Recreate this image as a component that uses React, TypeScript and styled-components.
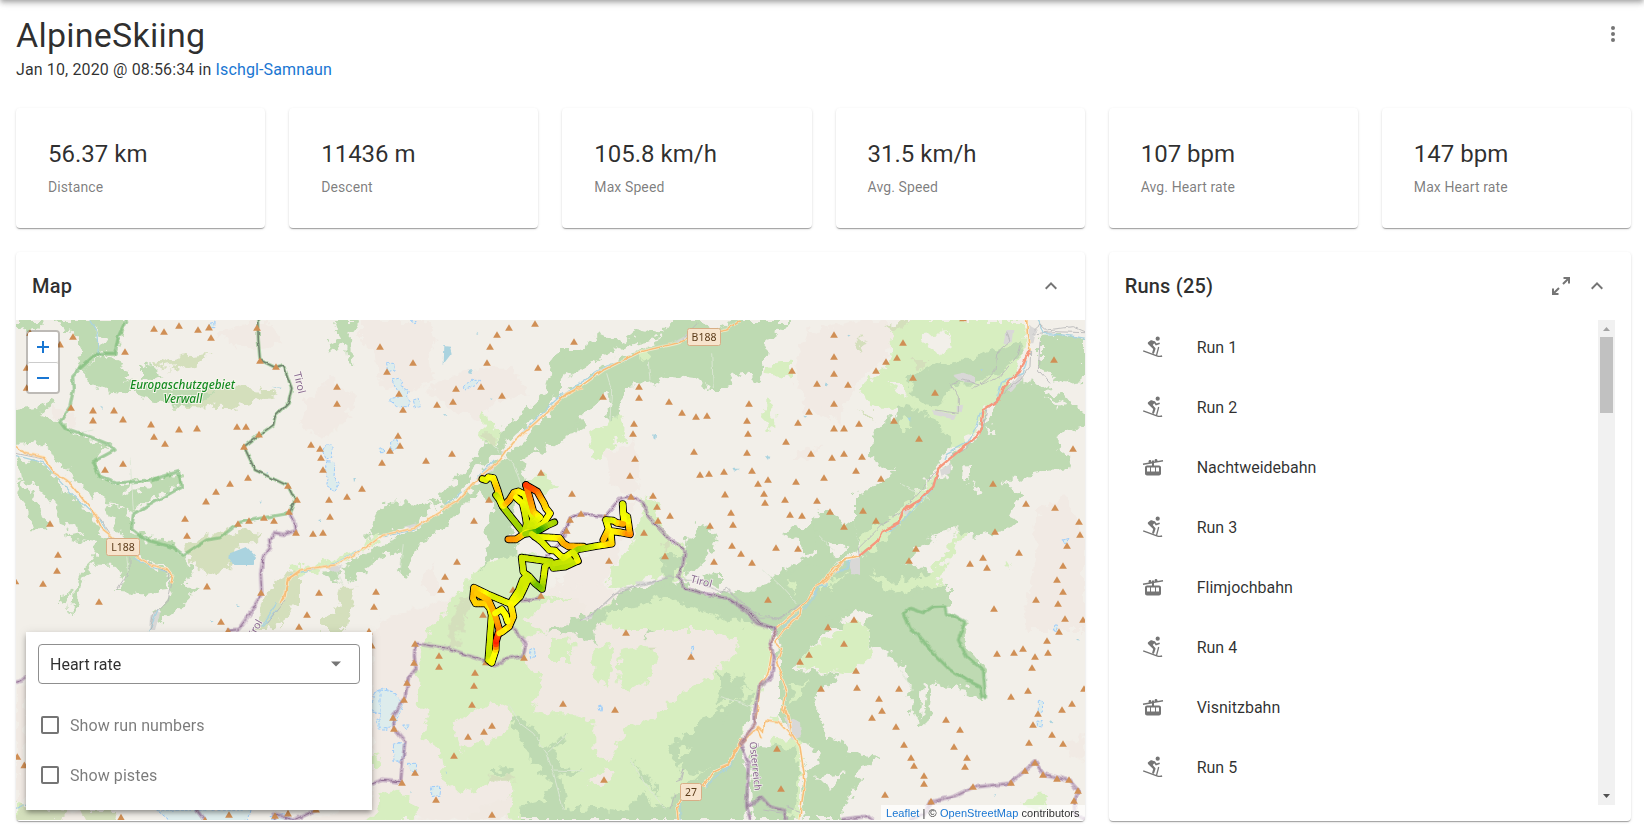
import React from "react";
import styled, { createGlobalStyle } from "styled-components";

const GlobalStyle = createGlobalStyle`
  * { box-sizing: border-box; }
  html, body { margin: 0; height: 825px; overflow: hidden; background: #fff; }
  body { font-family: Roboto, "Liberation Sans", sans-serif; color: rgba(0, 0, 0, 0.82); }
  p, h1, h2, ul { margin: 0; padding: 0; }
`;

/* ---------- layout ---------- */

const AppBar = styled.header`
  position: fixed;
  top: -64px;
  left: 0;
  right: 0;
  height: 64px;
  box-shadow: 0 2px 4px -1px rgba(0, 0, 0, 0.2), 0 4px 5px 0 rgba(0, 0, 0, 0.14),
    0 1px 10px 0 rgba(0, 0, 0, 0.12);
`;

const Page = styled.main`
  padding: 14px 13px 0 16px;
`;

const PageHeader = styled.div`
  display: flex;
  justify-content: space-between;
  height: 94px;
`;

const Title = styled.h1`
  font-size: 34px;
  font-weight: 400;
  line-height: 42px;
  letter-spacing: 0.25px;
`;

const Subtitle = styled.p`
  font-size: 16px;
  line-height: 24px;
  letter-spacing: 0.13px;
  margin-top: 2px;
`;

const Link = styled.a`
  color: #1976d2;
  text-decoration: none;
`;

const MenuButton = styled.button`
  border: 0;
  background: none;
  padding: 8px 6px 0 0;
  height: 32px;
`;

const Grid = styled.div`
  display: grid;
  grid-template-columns: repeat(6, 1fr);
  gap: 24px;
`;

const Card = styled.section<{ $span?: number }>`
  grid-column: span ${(p) => p.$span ?? 1};
  background: #fff;
  border-radius: 4px;
  overflow: hidden;
  box-shadow: 0 2px 1px -1px rgba(0, 0, 0, 0.2), 0 1px 1px 0 rgba(0, 0, 0, 0.14),
    0 1px 3px 0 rgba(0, 0, 0, 0.12);
`;

const StatCard = styled(Card)`
  height: 120px;
  padding: 29px 32px;
`;

const StatValue = styled.p`
  font-size: 24px;
  line-height: 34px;
`;

const StatLabel = styled.p`
  font-size: 14px;
  line-height: 20px;
  margin-top: 6px;
  letter-spacing: 0.1px;
  color: rgba(0, 0, 0, 0.52);
`;

const Panel = styled(Card)`
  height: 568.5px;
  display: flex;
  flex-direction: column;
`;

const PanelHeader = styled.div`
  display: flex;
  align-items: center;
  justify-content: space-between;
  height: 68px;
  padding: 0 22px 0 16px;
  flex: none;
`;

const PanelTitle = styled.h2`
  font-size: 20px;
  font-weight: 500;
  line-height: 32px;
  letter-spacing: 0.2px;
`;

const Actions = styled.div`
  display: flex;
  gap: 12px;
  align-items: center;
`;

/* ---------- map ---------- */

const MapArea = styled.div`
  position: relative;
  flex: 1;
  overflow: hidden;
`;

const MapSvg = styled.svg`
  display: block;
  width: 1069px;
  height: 500px;
`;

const ZoomControl = styled.div`
  position: absolute;
  top: 10px;
  left: 10px;
  width: 34px;
  border: 2px solid rgba(0, 0, 0, 0.22);
  border-radius: 4px;
  background-clip: padding-box;
`;

const ZoomButton = styled.button`
  display: flex;
  align-items: center;
  justify-content: center;
  width: 30px;
  height: 30px;
  padding: 0;
  border: 0;
  background: #fff;
  border-radius: 2px;
  & + & {
    border-top: 1px solid #ccc;
  }
`;

const Controls = styled.div`
  position: absolute;
  left: 10px;
  top: 312px;
  width: 346px;
  height: 178px;
  padding: 12px;
  background: #fff;
  box-shadow: 0 3px 4px -1px rgba(0, 0, 0, 0.2), 0 3px 6px rgba(0, 0, 0, 0.2),
    0 1px 10px rgba(0, 0, 0, 0.1);
`;

const Select = styled.div`
  display: flex;
  align-items: center;
  justify-content: space-between;
  height: 40px;
  padding: 0 17px 0 11px;
  border: 1px solid #8f8f8f;
  border-radius: 4px;
  font-size: 16px;
  margin-bottom: 16px;
`;

const CheckRow = styled.label`
  display: flex;
  align-items: center;
  gap: 11px;
  height: 50px;
  padding-left: 3px;
  font-size: 16px;
  letter-spacing: 0.08px;
  color: rgba(0, 0, 0, 0.52);
`;

const CheckBox = styled.span`
  width: 18px;
  height: 18px;
  border: 2px solid #757575;
  border-radius: 2px;
`;

const Attribution = styled.div`
  position: absolute;
  right: 0;
  bottom: 0;
  height: 16px;
  padding: 0 5px;
  background: rgba(255, 255, 255, 0.72);
  font: 11px/16px "Liberation Sans", Arial, sans-serif;
  letter-spacing: 0.06px;
  color: #333;
  white-space: nowrap;
`;

/* ---------- runs ---------- */

const RunBody = styled.div`
  display: flex;
  height: 485px;
  padding-right: 16px;
`;

const RunList = styled.ul`
  flex: 1;
  list-style: none;
  overflow: hidden;
  padding-left: 32px;
`;

const RunRow = styled.li`
  display: flex;
  align-items: center;
  gap: 32px;
  height: 60px;
  font-size: 16px;
  &:first-child {
    margin-top: -3px;
  }
`;

const ScrollTrack = styled.div`
  display: flex;
  flex-direction: column;
  align-items: center;
  width: 17px;
  background: #f1f1f1;
`;

const ScrollArrow = styled.svg`
  width: 17px;
  height: 17px;
  flex: none;
`;

const ScrollThumb = styled.div`
  width: 13px;
  height: 76px;
  background: #c1c1c1;
  margin-bottom: auto;
`;

const Chevron = () => (
  <svg width="24" height="24" viewBox="0 0 24 24" fill="#757575">
    <path d="M12 8l-6 6 1.410 1.410L12 10.830l4.590 4.580L18 14z" />
  </svg>
);

const Expand = () => (
  <svg width="24" height="24" viewBox="0 0 24 24" fill="#757575">
    <path d="M14.500 3H21v6.500h-2V6.410l-4.300 4.300-1.410-1.410L17.590 5H14.500zM9.500 21H3v-6.500h2v3.090l4.300-4.300 1.410 1.410L6.410 19H9.500z" />
  </svg>
);

const SkiIcon = () => (
  <svg width="24" height="24" viewBox="0 0 24 24" fill="none" stroke="#757575">
    <circle cx="16.700" cy="3.700" r="2.100" fill="#757575" stroke="none" />
    <path d="M7.100 7.300l2.300-1.700c.6-.4 1.200-.5 1.900-.2l2.700 1.100-.1 1.100-2.200 2.500 2.600 2.800c.3.300.3.700.2 1.100l-1.600 4.800-1.900-.6 1.200-4.300-4.700-4.500c-.9-.8-.9-1.600-.4-2.100z" fill="#757575" stroke="none" />
    <path d="M13.200 6.800l1.900 2.700 3.600-1.200" strokeWidth="1.700" />
    <path d="M2.200 15.800l13.700 5c1.900.7 3.600.8 5.200.2" strokeWidth="1.400" />
    <path d="M17.700 12l-2.200 8.400" strokeWidth="1.300" />
  </svg>
);

const GondolaIcon = () => (
  <svg width="24" height="24" viewBox="0 -0.500 24 24" fill="#757575">
    <path d="M18 10H13V7.590L22.120 6.070L21.880 4.590L16.410 5.500C16.460 5.350 16.500 5.180 16.500 5C16.500 4.170 15.830 3.500 15 3.500S13.500 4.170 13.500 5C13.500 5.350 13.630 5.680 13.840 5.930L13 6.070V5H11V6.410L10.410 6.500C10.460 6.350 10.500 6.180 10.500 6C10.500 5.170 9.830 4.500 9 4.500S7.500 5.170 7.500 6C7.500 6.360 7.630 6.680 7.830 6.930L1.880 7.930L2.120 9.410L11 7.930V10H6C4.900 10 4 10.900 4 12V18C4 19.100 4.900 20 6 20H18C19.100 20 20 19.100 20 18V12C20 10.900 19.100 10 18 10M6 16V12H9V16H6M10 16V12H14V16H10M18 16H15V12H18V16Z" />
  </svg>
);

/* Map drawing data. Each survey sheet has its own origin and a 3:1 scale. */
type Sheet = "A" | "B" | "C" | "D" | "E" | "F" | "G" | "R";
const ORIGIN: Record<Sheet, [number, number]> = {
  A: [0, 310],
  B: [280, 310],
  C: [560, 310],
  D: [820, 310],
  E: [0, 610],
  F: [380, 580],
  G: [720, 560],
  R: [440, 460],
};
type Shapes = Partial<Record<Sheet, string>>;

const rock: Shapes = {
  A: "M655 75L750 30L800 30L850 100L760 115L700 105ZM150 290L190 300L230 320L220 350L170 325Z",
  B: "M240 30L440 30L480 80L440 150L470 210L380 250L300 230L290 130L240 90ZM80 270L150 200L220 260L200 330L140 390L60 340ZM440 240L560 180L700 170L740 250L640 280L600 330L520 300ZM430 800L465 760L475 840L445 860Z",
  C: "M700 180L740 60L810 70L810 330L740 300L720 230ZM140 430L230 390L240 540L200 550L150 520ZM690 440L780 400L760 450ZM0 800L120 700L230 560L170 740L110 880L0 930Z",
  D: "M0 60L130 30L230 40L200 140L110 220L60 340L0 290ZM650 590L740 560L795 700L795 960L610 960L640 780Z",
  E: "M1116 60L1200 40L1200 640L900 640L1116 560ZM48 230L78 220L78 580L48 600ZM130 600L300 600L310 640L130 640Z",
  F: "M0 120L100 90L200 60L260 30L600 20L1080 60L1080 720L0 720Z",
  G: "M1040 550L1090 530L1095 600L1050 590ZM0 220L60 240L60 320L0 320Z",
};

const grass: Shapes = {
  A: "M285 190L330 205L320 215L290 200ZM870 775L900 765L900 800L870 795Z",
  B: "M20 790L150 750L240 720L320 640L290 700L200 750L30 810ZM600 310L640 340L665 370L640 410L600 400L605 350ZM730 520L780 500L825 520L790 560L730 550ZM465 945L520 870L600 770L690 730L800 740L780 850L890 870L900 960L465 960Z",
  C: "M620 165L690 155L690 205L620 195ZM613 265L640 270L640 360L613 355ZM90 365L180 310L200 370L190 390L150 410L130 455L100 440ZM245 560L290 580L300 640L330 690L380 720L370 810L280 800L200 830L140 830L160 770L220 700L240 640ZM0 850L40 960L0 960ZM140 880L300 850L560 900L620 960L40 960ZM680 810L715 810L700 850L680 840Z",
  D: "M210 60L270 30L620 30L610 110L560 260L480 330L430 400L370 420L330 320L260 290L190 290L150 290L115 235L215 150ZM110 660L230 610L360 480L330 560L240 650L120 750ZM560 740L570 780L550 760Z",
  E: "M1116 440L1140 440L1130 475L1116 470ZM1080 640L1200 540L1200 640ZM48 580L100 600L48 640Z",
  F: "M130 160L200 100L260 0L500 50L560 100L660 120L780 140L900 130L880 110L1080 170L1080 720L270 720L410 630L370 590L240 640L190 600L180 500L120 480L150 390L110 370L120 250ZM0 650L60 630L110 680L110 720L0 720Z",
  G: "M0 160L70 150L160 220L150 330L130 380L100 450L60 540L0 620ZM160 530L240 540L240 780L100 780ZM900 730L950 700L985 730L960 750Z",
};

const barren: Shapes = {
  F: "M430 170L500 150L660 130L800 150L940 110L1050 160L1020 280L900 340L830 410L780 430L740 440L690 550L640 500L640 430L580 400L450 400L480 340L490 300L440 260ZM215 430L330 370L400 400L380 470L290 490L240 510L230 460ZM280 700L400 640L390 720L270 720ZM620 610L650 570L710 570L690 610ZM510 60L620 60L620 120L500 150L430 130Z",
  G: "M0 230L60 250L30 300L0 310Z",
};

const scrub: Shapes = {
  A: "M470 240L700 225L840 250L700 295L530 290ZM460 165L540 140L635 132L600 160L500 190L540 165L470 175ZM555 710L620 680L700 660L790 670L760 700L700 720L690 780L640 795L600 780L570 760ZM820 830L860 780L900 790L900 870L850 920L800 960L770 960L790 870Z",
  B: "M0 830L40 830L45 880L10 930L0 960ZM180 830L230 830L215 900L180 960L160 960ZM130 910L180 940L160 950ZM610 370L650 370L640 410L620 400ZM550 850L590 830L560 930L530 900Z",
  C: "M300 700L325 680L320 730Z",
  D: "M195 45L250 30L270 30L225 60ZM110 90L135 85L120 130L105 110ZM110 300L150 310L170 330ZM275 150L330 150L310 180L280 170Z",
  E: "M960 10L1050 0L1040 60L970 60ZM60 590L200 600L190 640L48 640ZM240 600L350 600L340 640L260 640Z",
  F: "M205 150L235 80L250 90L235 190L215 190ZM320 600L400 575L405 600L340 605ZM795 200L830 200L810 220Z",
  G: "M160 660L215 650L220 710L180 720Z",
};

const forest: Shapes = {
  A: "M48 30L140 30L120 55L75 62L48 50ZM150 30L378 30L365 75L350 110L350 130L290 130L250 180L225 175L245 120L232 85L205 55L150 40ZM250 180L290 135L345 140L360 170L385 180L380 205L400 215L480 230L560 235L640 240L600 280L525 290L480 275L380 250L320 245L260 215ZM420 170L450 165L485 195L450 210L420 200ZM48 300L110 290L165 265L150 290L120 310L180 335L195 360L240 365L270 390L330 410L300 430L245 440L200 480L180 470L160 430L110 400L48 405ZM215 450L285 425L290 480L320 515L340 540L280 560L240 535L205 490ZM310 540L360 520L545 490L550 520L470 560L395 605L360 590L310 585ZM48 440L130 465L200 545L270 610L300 660L280 680L215 655L180 640L170 600L140 560L110 530L60 500ZM60 500L100 560L125 600L140 655L100 655L80 600L50 550ZM320 590L380 600L400 660L440 685L500 690L550 740L580 780L550 830L600 830L540 890L480 940L460 930L500 870L520 800L500 775L420 740L360 680ZM190 680L280 660L330 690L400 740L470 770L510 790L500 840L430 850L350 845L380 790L330 770L270 770L240 820L230 880L210 910L215 850L240 790L280 750L290 700ZM180 850L215 840L200 870L180 880Z",
  B: "M165 30L235 30L215 80L220 160L200 155L195 100L150 130L140 100L180 80ZM280 640L310 580L370 575L450 590L440 615L400 640L300 680L265 690ZM440 570L475 560L470 595ZM490 540L560 480L610 400L650 400L670 350L730 310L790 250L830 120L900 120L900 215L840 250L780 310L700 380L640 450L560 530L500 590L480 590ZM190 770L300 700L400 665L470 610L560 550L610 500L660 450L720 400L790 330L850 260L905 250L905 360L840 400L760 430L720 450L740 520L700 600L690 680L720 740L640 740L600 790L620 700L620 640L640 590L600 540L560 580L480 660L420 700L380 800L350 790L370 720L300 740L210 815ZM135 785L180 780L175 815L140 800Z",
  C: "M0 150L60 120L120 70L190 100L240 60L300 75L340 30L700 30L660 60L620 90L610 190L595 220L560 185L520 195L495 240L450 240L410 200L330 195L260 225L200 230L165 335L140 330L150 250L100 290L0 385ZM415 640L440 640L470 690L440 740L390 790L365 800L380 700ZM300 740L370 730L350 810L420 850L520 870L600 940L560 930L440 880L330 850L200 900L140 900L200 840L310 810ZM810 600L780 600L750 640L660 670L720 690L740 730L810 720ZM520 830L600 820L690 770L740 740L810 740L810 960L650 960L560 890ZM440 800L520 790L510 840L440 820ZM100 900L150 890L120 950L60 960Z",
  D: "M340 170L400 165L480 130L560 110L600 100L605 130L540 190L470 220L400 215L370 280L330 290L280 260L260 200ZM150 400L165 360L195 325L225 325L230 280L330 310L365 360L400 380L390 400L345 480L280 560L240 600L170 650L110 700L105 640L105 550L180 520L220 490L150 440ZM660 80L795 80L795 210L700 220L660 180ZM610 210L700 240L760 280L800 320L800 345L750 360L710 380L710 410L755 450L750 475L630 490L600 515L555 515L605 555L570 600L585 630L540 670L470 680L390 655L280 720L260 760L300 770L380 830L390 870L350 900L430 930L430 960L-10 960L-10 830L110 740L170 700L240 640L340 530L360 480L440 405L480 370L495 310L560 230ZM-10 610L105 640L110 720L60 760L-10 810Z",
  F: "M390 410L430 410L480 480L500 500L530 480L570 465L520 510L540 560L610 575L540 590L555 690L640 680L740 700L780 640L850 690L900 640L950 590L1080 480L1080 720L430 720L420 680L500 660L510 590L450 540L400 440ZM750 530L810 600L850 650L790 600ZM860 500L930 460L960 420L1085 350L1085 500L950 580L900 570ZM640 120L700 60L850 20L900 10L1085 90L1085 150L990 100L900 110L850 130L790 180L830 90L780 60L700 90ZM500 150L600 110L640 140L650 190L600 170ZM1010 340L1085 280L1085 350L1010 370ZM330 575L410 555L410 580L350 585Z",
  G: "M0 110L110 90L170 60L220 30L330 20L420 40L520 110L690 90L690 130L665 160L735 190L720 240L790 330L795 430L740 390L660 380L640 370L625 490L600 490L570 450L575 380L545 320L480 255L450 270L440 180L400 150L330 170L300 230L250 290L230 330L370 340L280 410L300 470L340 460L310 520L380 560L380 580L480 590L400 640L430 660L390 700L370 780L250 780L250 560L180 470L180 300L170 220L100 180ZM0 630L60 560L80 640L80 780L0 780ZM100 550L230 570L235 640L215 780L100 780L90 640ZM0 480L60 430L100 400L90 480L20 560L0 560ZM0 340L100 390L0 380Z",
};

const clearings: Shapes = {
  A: "M285 60L325 90L300 110L290 80ZM380 525L470 505L460 530L380 545ZM200 500L240 540L275 600L310 640L330 680L300 650L250 590Z",
  B: "M570 500L620 450L700 400L690 415L640 455L600 500Z",
  C: "M0 215L60 180L170 120L230 90L240 115L120 175L60 225L0 255ZM220 100L300 85L280 110L230 120ZM460 60L420 30L520 30Z",
  D: "M305 75L390 68L395 110L355 130L320 105ZM205 225L250 225L270 260L240 250ZM430 465L450 470L450 500L430 495ZM500 360L525 350L515 370ZM660 180L700 200L690 220L755 235L795 270L750 260L670 225ZM680 255L730 275L720 290ZM440 520L500 545L490 555ZM30 700L80 710L50 745L30 735ZM505 290L530 280L510 320L490 360ZM640 35L795 30L795 80L680 80ZM360 480L390 460L385 500L360 510ZM60 930L100 900L150 915L130 940L80 940Z",
  G: "M0 0L170 0L170 50L100 95L0 90ZM240 545L290 570L300 620L255 630ZM560 180L620 215L600 222ZM730 335L775 310L770 360L740 350ZM605 370L625 375L615 440L600 480ZM400 350L440 300L480 260L540 330L560 400L450 480L310 500L290 420ZM130 485L190 490L215 520L180 520ZM290 650L370 640L330 690Z",
};

const meadow: Shapes = {
  D: "M415 660L435 675L350 800L380 825L330 825L250 850L190 835L150 785L220 815L320 800L400 700ZM245 330L270 320L265 375L250 375ZM80 940L140 935L150 960L80 960ZM120 680L230 620L200 690L130 740ZM0 820L90 790L60 810L0 850Z",
  F: "M510 180L560 175L580 190L570 240L510 240ZM640 210L690 190L700 250L680 320L640 290ZM720 210L800 190L830 230L820 290L740 340L715 290ZM350 280L470 275L485 320L440 340L450 400L400 390L350 350ZM560 640L640 600L700 620L780 560L770 640L740 690L640 670ZM620 560L640 520L690 560L640 590ZM900 500L940 510L900 540Z",
  G: "M250 290L300 240L370 215L385 185L440 190L450 290L400 340L240 325ZM200 60L230 65L220 100ZM210 380L270 360L230 420L215 440ZM150 460L180 470L160 490ZM0 190L50 180L80 200L30 220Z",
  C: "M230 130L280 120L280 145L240 150ZM200 890L330 860L420 900L540 960L180 960Z",
};

const residential: Shapes = {
  A: "M470 905L480 910L465 960L447 960L450 920Z",
  B: "M140 770L185 765L180 785L160 785ZM610 480L650 455L640 480L615 495ZM665 425L680 420L670 430ZM370 650L410 640L400 655Z",
  D: "M90 740L120 735L120 795L95 785ZM400 195L430 188L465 200L465 220L425 215ZM335 300L410 315L400 328L345 315ZM560 60L580 60L575 100L550 100ZM622 45L650 60L640 100L628 100ZM560 240L600 190L605 210L575 245ZM50 755L80 750L70 770ZM250 600L270 590L260 620ZM410 285L430 285L425 310L410 305ZM360 480L395 460L390 490L365 500Z",
  F: "M600 125L640 95L635 120Z",
  C: "M225 815L290 810L280 825L230 825ZM340 95L385 70L375 90Z",
  G: "M195 470L240 490L245 530L215 540ZM385 0L420 0L420 40L395 40Z",
};

const lakes: Shapes = {
  A: "M690 730L740 710L768 740L760 765L700 765L688 745ZM300 287L308 290L308 297ZM800 487L805 487L800 495ZM778 575L786 575L782 585ZM708 885L720 890L712 893ZM630 928L638 932L630 934ZM815 230L845 233L840 238Z",
  B: "M490 108L510 110L515 130L488 165ZM565 182L578 180L572 192L565 190ZM220 505L228 508L222 520ZM492 315L502 316L498 321ZM590 68L595 72L590 76ZM630 265L638 266L634 270ZM115 630L124 628L118 636Z",
  C: "M280 370L288 372L286 392L280 388ZM615 438L628 440L624 450ZM520 476L540 476L525 485ZM730 320L742 322L735 326Z",
  D: "M265 322L276 325L272 335ZM478 177L486 178L482 184ZM15 218L28 220L20 228ZM82 75L92 74L86 80Z",
  F: "M200 572L204 578L202 584ZM90 630L96 636L92 640Z",
  G: "M1068 235L1080 235L1078 242ZM820 703L828 703L824 711ZM990 480L1000 484L994 490Z",
};

const glaciers: Shapes = {
  A: "M630 40L645 36L645 50L632 50Z",
  B: "M335 210L355 205L370 215L362 230L385 240L380 260L390 275L385 290L350 290L330 275L330 265L360 260ZM400 270L415 265L422 290L405 292ZM320 160L345 160L345 180L322 185ZM550 230L575 208L602 208L590 225L555 240ZM135 402L155 402L158 440L140 450L128 425ZM140 455L165 458L162 500L178 520L165 545L140 530L145 500L135 480ZM335 395L352 390L355 410L335 425ZM298 418L310 415L310 428L300 428ZM390 30L412 32L405 42Z",
  E: "M1120 250L1150 235L1190 250L1175 290L1200 310L1116 310ZM1130 325L1168 320L1160 360L1135 360ZM1185 410L1200 400L1200 460L1185 440ZM470 600L750 600L740 640L520 640ZM810 620L850 610L900 640L830 640Z",
  F: "M0 330L40 335L70 375L40 440L0 445ZM40 495L75 490L70 540L42 545ZM85 550L110 550L108 575L90 570ZM155 620L182 618L180 645L155 650ZM65 435L88 435L80 452ZM448 210L462 203L466 228L452 236ZM655 380L665 378L663 393ZM932 200L942 198L938 218Z",
  G: "M955 425L967 422L968 455L955 460ZM952 480L970 482L965 502L952 498ZM1005 200L1012 197L1012 215L1003 213Z",
  D: "M725 690L750 685L740 700L730 700ZM705 945L712 945L710 960L700 960Z",
};

const streams: Shapes = {
  A: "M268 30L290 65L295 130M48 437L130 458L170 500L215 550L260 595L300 630L330 680M400 745L450 770L500 785M830 880L785 950",
  B: "M0 880L18 850M30 795L165 760L240 720M310 680L400 660L430 640M500 585L545 545M590 505L640 450M690 405L790 305L850 250",
  C: "M0 262L60 220L140 168L210 145M640 960L730 885L770 840L810 800",
  D: "M655 30L670 70L730 75L795 85M620 150L610 190L545 215L530 270L480 310L468 350L445 395L380 430L372 450M355 490L335 540L240 640L200 668M90 750L85 775L40 785M0 828L18 830L18 810",
  G: "M385 0L380 30L345 35M320 65L290 90L270 130L190 200M0 630L30 620L40 595",
  E: "M48 595L78 582M830 0L790 50M475 0L445 66",
  F: "M1080 500L1045 565L1000 595L975 620M900 660L900 720",
};

const rails: Shapes = {
  A: "M48 430L130 447M270 600L300 625L330 670L350 690M410 742L470 768L500 785L515 820L505 870L460 915L450 960M390 740L390 780L350 840M855 870L800 940",
  C: "M80 930L130 885L180 840L260 825L320 800L400 810L470 840L520 850L560 890L600 925L660 925L740 870M350 100L370 85L415 40",
  D: "M118 738L115 715L150 680L190 640L240 610L320 520L350 480M390 435L440 415L490 350L500 300L560 240L600 210L630 170L632 120M455 235L480 225L525 185L530 130L570 95L560 65M395 220L430 210L480 225L540 200L590 140L600 105M390 220L415 260L415 310L345 300M640 72L700 65L795 68M640 60L660 42L680 60L760 50L795 65M660 95L655 180L690 220",
  F: "M600 125L640 100L700 45L780 15L860 -5M890 605L905 600L912 570L900 600M885 640L870 690",
  G: "M0 95L20 85L60 125L120 165L175 175L220 150L265 120M130 750L190 760M200 740L240 755",
};

const minorPaths: Shapes = {
  A: "M390 440L400 600M230 370L280 360M380 740L385 790",
  B: "M640 410L700 460L725 530M370 700L360 790M170 785L190 830",
  C: "M140 190L155 240L150 330M265 155L270 210M455 130L460 235",
  D: "M0 680L40 720M240 520L330 570",
  F: "M385 370L420 430L460 460L500 520L520 580L550 690M500 520L560 465M520 570L610 573M750 540L800 620L855 685",
  G: "M130 30L185 80L230 130M540 330L580 390M0 410L100 440",
};

const primary: Shapes = {
  A: "M48 407L75 430L130 442L165 490L210 520L250 570L290 620L305 655L350 690M405 740L450 765L500 775L520 800L515 820M900 785L865 805L855 860L845 872",
  B: "M0 880L15 850L22 810L60 780L165 765L240 725L310 675L400 655L480 605L530 575L600 500L660 450L700 395L770 335L860 250L905 235",
  C: "M0 265L60 230L130 180L240 125L350 100L420 75L500 60L540 30",
  D: "M620 28L622 70L630 122M118 738L80 745L45 770L0 825",
  F: "M1085 475L1045 555L1000 575L970 620M900 660L890 680L895 720",
  G: "M380 -5L310 70L285 80L265 120L170 205L150 250L155 280L145 340L118 380L115 430L105 490L62 550L30 610L0 622M265 120L245 135L240 165L190 210L165 245L185 265L170 310L200 390L185 450L205 460L215 520L240 560L255 660L238 780M62 550L115 500L130 515L135 480L175 485L215 530M190 460L195 440L205 460M110 500L125 535",
};

const trunk: Shapes = {
  D: "M628 120L610 160L600 185L550 230L535 270L490 300L485 350L470 380L420 420L355 475L340 530L300 570L250 600L235 640L185 665L170 695L118 738",
};

const reserveArea: Shapes = {
  G: "M553 160L570 145L610 158L640 140L675 138L680 165L700 165L735 185L715 240L740 290L790 330L797 410L785 410L780 380L740 360L690 330L640 280L600 230L570 205Z",
};

const reserveLine: Shapes = {
  A: "M868 610L790 623L720 637L660 683L620 690L550 735L520 712L440 690L395 655L400 615L440 590L545 530L535 485L450 510L350 520L300 500L280 455L345 420L330 405L270 380L195 355L180 335L210 290L220 240L218 200L240 175L290 130L345 130L355 80L378 30M773 30L775 90L780 150L825 172L850 165L875 235L865 280L825 320L820 345L777 375L732 410L765 480L863 527L885 570L868 610",
  G: reserveArea.G,
};

const darkBorder: Shapes = {
  A: "M773 30L775 90L780 150L825 172L850 165L875 235L865 280L825 320L820 345L777 375L732 410L765 480L863 527L885 570L868 610",
};

const border: Shapes = {
  A: "M868 610L885 640L888 662L850 673L822 668L808 690L812 712L790 740L782 790L785 850L750 910L715 958L680 962",
  B: "M783 858L775 868L725 872M800 740L845 690L862 650L870 625L902 608",
  C: "M0 680L20 655L30 625L62 610L135 620L180 565L212 558L250 580L265 620L320 680L375 720L370 760L355 800L375 835L430 850L500 865L570 905L600 940L652 960",
  E: "M48 217L65 212L78 200M1200 515L1150 508L1116 522M590 600L620 640M720 640L830 640L820 610L880 630L950 600",
  F: "M105 190L205 205L260 225L320 245L345 260L375 235L430 228L438 190L395 140M105 190L103 230L108 265L85 295L75 350L40 410L42 445L75 485L65 570L62 605L0 600",
  G: "M27 118L80 155L110 190L168 208L150 250L163 290L155 350L118 380L105 450L105 490L62 550L85 610L80 740L92 780M80 740L125 712L150 740L190 750L200 780M365 778L445 768L460 780M565 780L610 765L632 725L700 710L758 682L870 670L915 632L945 605L970 642L1047 660L1075 692L1062 730L1065 760L1095 780",
};

const peaks: Partial<Record<Sheet, number[]>> = {
  A: [90,68,180,103,219,80,80,173,80,233,375,125,462,56,492,65,537,47,594,59,627,52,633,83,771,53,780,152,828,170,213,293,279,301,342,301,279,331,369,328,453,343,462,380,495,401,537,358,591,355,711,350,738,350,777,373,732,410,369,461,315,479,744,503,690,521,648,545,618,574,555,626,561,677,714,641,747,632,792,623,822,632,150,641,174,734,171,782,129,821,297,875,621,829,783,848,663,935,46,813],
  B: [24,527,51,569,27,605,48,668,99,671,129,668,171,230,171,281,300,110,399,158,321,185,357,251,369,299,471,284,519,275,528,236,603,230,621,158,630,110,651,74,687,53,765,41,774,173,666,257,354,377,360,407,330,422,306,458,93,404,120,416,123,443,129,479,246,536,201,560,147,569,150,620,438,452,516,431,627,569,582,632,531,755,495,800,483,839,288,845,282,890,117,848,81,914,57,950,699,839,783,857,609,914,783,488,882,95],
  C: [129,260,237,230,237,263,327,275,366,308,408,320,441,317,222,341,219,371,225,446,210,497,402,425,420,494,447,491,492,485,36,551,213,560,279,557,291,590,330,617,294,632,252,668,315,738,147,752,30,629,63,611,20,662,135,622,495,553,513,608,519,644,450,647,516,707,543,731,462,755,576,758,561,428,564,371,561,332,567,281,696,182,771,221,747,305,714,338,678,395,753,431,576,482,594,521,624,509,612,551,615,578,675,569,708,515,771,572,690,614,726,617,648,713,714,716,624,869],
  D: [42,74,42,140,42,191,84,224,42,281,42,355,72,355,117,341,36,443,72,431,126,440,108,482,12,503,183,506,249,98,231,143,198,155,168,182,279,203,345,248,222,332,297,386,702,149,759,416,519,521,618,581,705,593,30,605,129,602,168,632,72,650,777,635,780,674,741,707,525,665,288,716,267,752,450,761,489,743,501,773,597,728,729,767,711,809,729,845,714,881,648,869,522,896,102,929,735,926,789,929,24,951,429,24],
  E: [1107,64,1115,106,684,62,52,440,73,465,363,622,687,614,825,617,864,610,948,598,615,630],
  F: [105,191,102,248,177,227,177,260,81,308,72,359,39,413,42,446,285,278,282,317,276,374,336,437,312,455,264,470,222,527,105,578,66,608,168,659,336,704,432,233,738,158,933,230,549,371,705,389,672,599,318,246],
  G: [372,251,267,284,240,305,408,332,411,383,303,386,537,386,477,416,486,452,456,473,528,500,552,554,573,593,582,617,612,647,612,671,495,704,678,479,720,509,702,560,741,593,735,620,171,566,183,686,1017,215,981,242,984,278,909,266,882,278,831,281,945,290,936,323,924,392,873,410,954,461,939,494,927,548,1056,431,1026,449,1092,386,996,524,1029,551,945,608,915,632,969,644,1011,656,1047,659,1074,692,1062,722,873,668,759,680,633,724],
};

/* Recorded track: x, y, relative heart rate. */
const track: number[][][] = [
  [[412,303,.4],[375,320,.37],[340,324,.35],[332,305,.38],[245,293,.4],[250,335,.4],[262,350,.45]],
  [[332,305,.35],[315,320,.4],[312,345,.45],[306,387,.3],[285,370,.2],[268,350,.4],[252,385,.42],[240,410,.42],[214,435,.5]],
  [[262,345,.4],[248,360,.42],[236,392,.4],[216,422,.48]],
  [[127,57,.48],[138,60,.42],[145,52,.48],[160,54,.5],[173,90,.62],[187,137,.48]],
  [[168,105,.35],[178,118,.42],[187,137,.48]],
  [[190,142,.35],[250,218,.3]],
  [[190,138,.5],[208,120,.7],[222,98,.62],[235,94,.55],[255,104,.48],[263,140,.45],[280,175,.45],[265,215,.38]],
  [[228,112,.5],[248,130,.48],[255,160,.43],[260,190,.4],[255,215,.38]],
  [[258,75,.8],[272,125,.72],[280,155,.65],[300,172,.5],[270,200,.4]],
  [[258,75,.9],[292,95,.82],[312,130,.6],[318,145,.6],[330,160,.52],[310,190,.48],[265,215,.38]],
  [[262,215,.4],[240,230,.6],[228,238,.66],[205,238,.72]],
  [[343,187,.3],[322,196,.35],[290,215,.05],[255,222,.35]],
  [[285,230,.42],[358,234,.52],[370,250,.64],[385,259,.68],[430,260,.6]],
  [[275,222,.4],[305,245,.43],[328,270,.45],[345,272,.45],[362,288,.5],[390,300,.4],[345,310,.38]],
  [[370,295,.42],[395,278,.48],[415,268,.3],[470,258,.42],[515,251,.6],[512,213,.5],[540,217,.55],[570,223,.75],[562,170,.45],[550,162,.45],[548,132,.43],[552,185,.5]],
  [[550,192,.68],[530,188,.65],[520,182,.48],[498,180,.42],[506,207,.5],[490,240,.65]],
  [[414,303,.55],[408,290,.45],[400,278,.42]],
  [[212,432,.48],[150,406,.42],[102,383,.6],[99,415,.64],[107,430,.58],[137,430,.6],[150,445,.55],[155,465,.45],[145,600,.38],[155,608,.48],[167,570,.5],[168,545,.96],[178,510,.78],[165,465,.66],[145,420,.65],[110,400,.6]],
  [[212,432,.5],[220,470,.57],[207,500,.6],[187,515,.5],[178,520,.6]],
  [[165,460,.5],[185,448,.48],[197,465,.5],[203,485,.5]],
];

function heat(v: number) {
  const mix = (a: number[], b: number[], t: number) =>
    `rgb(${a.map((c, i) => Math.round(c + (b[i] - c) * t)).join(",")})`;
  return v < 0.5
    ? mix([0, 136, 0], [255, 255, 0], v / 0.5)
    : mix([255, 255, 0], [255, 0, 0], (v - 0.5) / 0.5);
}

const place = (s: Sheet) => `translate(${ORIGIN[s][0]} ${ORIGIN[s][1]}) scale(0.33333)`;

function Layer({ shapes, ...rest }: { shapes: Shapes } & React.SVGProps<SVGGElement>) {
  return (
    <g {...rest}>
      {(Object.keys(shapes) as Sheet[]).map((s) => (
        <path key={s} d={shapes[s]} transform={place(s)} />
      ))}
    </g>
  );
}

function Line({ shapes, color, width, ...rest }: { shapes: Shapes; color: string; width: number } & React.SVGProps<SVGGElement>) {
  return <Layer shapes={shapes} fill="none" stroke={color} strokeWidth={width * 3} strokeLinejoin="round" {...rest} />;
}

function Shield({ x, y, w, text }: { x: number; y: number; w: number; text: string }) {
  return (
    <g>
      <rect x={x} y={y} width={w} height="17" rx="2" fill="#f7e4cd" stroke="#d8ae86" />
      <text x={x + w / 2} y={y + 12.5} textAnchor="middle" fontFamily="'Noto Sans', sans-serif" fontSize="10.500" fill="#5a3a18">
        {text}
      </text>
    </g>
  );
}

function Track() {
  return (
    <g strokeLinecap="round" strokeLinejoin="round" fill="none" transform={place("R")}>
      {track.map((run, i) => (
        <polyline key={i} points={run.map(([x, y]) => `${x},${y}`).join(" ")} stroke="#000" strokeWidth="23" />
      ))}
      {track.map((run, i) =>
        run.slice(1).flatMap((b, j) => {
          const a = run[j];
          const n = Math.max(1, Math.round(Math.hypot(b[0] - a[0], b[1] - a[1]) / 8));
          return Array.from({ length: n }, (_, k) => {
            const at = (t: number) => a.map((c, m) => c + (b[m] - c) * t);
            const p = at(k / n);
            const q = at((k + 1) / n);
            return (
              <line key={`${i}-${j}-${k}`} x1={p[0]} y1={p[1]} x2={q[0]} y2={q[1]} stroke={heat((p[2] + q[2]) / 2)} strokeWidth="17" />
            );
          });
        })
      )}
    </g>
  );
}

function TerrainMap() {
  const label = {
    fontFamily: "'Noto Sans', sans-serif",
    fontSize: 10.5,
    fill: "#8a6a90",
    stroke: "#f5f2ee",
    strokeWidth: 1.5,
    paintOrder: "stroke",
  };
  return (
    <MapSvg viewBox="16 320 1069 500">
      <defs>
        <filter id="rough" filterUnits="userSpaceOnUse" x="0" y="300" width="1100" height="540" colorInterpolationFilters="sRGB">
          <feTurbulence type="fractalNoise" baseFrequency="0.1" numOctaves="3" seed="4" />
          <feDisplacementMap in="SourceGraphic" scale="16" xChannelSelector="R" yChannelSelector="G" />
        </filter>
        <filter id="wobble" filterUnits="userSpaceOnUse" x="0" y="300" width="1100" height="540" colorInterpolationFilters="sRGB">
          <feTurbulence type="fractalNoise" baseFrequency="0.12" numOctaves="2" seed="9" />
          <feDisplacementMap in="SourceGraphic" scale="4" xChannelSelector="R" yChannelSelector="G" />
        </filter>
      </defs>
      <rect x="0" y="300" width="1100" height="540" fill="#f2efe9" />
      <g filter="url(#rough)">
        <Layer shapes={rock} fill="#f1eae4" />
        <Layer shapes={grass} fill="#d7eec0" />
        <Layer shapes={barren} fill="#f0e9e2" />
        <Layer shapes={scrub} fill="#d4dfbc" />
        <Layer shapes={forest} fill="#bedab2" />
        <Layer shapes={clearings} fill="#f2efe9" />
        <Layer shapes={meadow} fill="#d7eec0" />
      </g>
      <g filter="url(#wobble)">
        <Layer shapes={reserveArea} fill="#bedab2" />
        <Layer shapes={residential} fill="#d9d8d7" />
        <Layer shapes={lakes} fill="#aad3df" />
        <Layer shapes={glaciers} fill="#ddecec" stroke="#9ccbfa" strokeWidth="3" strokeDasharray="9 5" />
        <Line shapes={minorPaths} color="#dde6d5" width={0.9} />
        <Line shapes={streams} color="#aad3df" width={1.3} />
        <Line shapes={rails} color="#b9b9ba" width={0.9} />
        <Line shapes={primary} color="#fff3dc" width={2.6} />
        <Line shapes={primary} color="#f6bd78" width={1.6} />
        <Line shapes={trunk} color="#f6977d" width={2.3} />
        <Line shapes={reserveLine} color="#7fbd7a" width={3.6} opacity=".5" />
        <Line shapes={reserveLine} color="#6fb56c" width={1.3} opacity=".5" />
        <Line shapes={darkBorder} color="#6d786b" width={1.5} opacity=".85" />
        <Line shapes={border} color="#ac8bb0" width={4} opacity=".55" />
        <Line shapes={border} color="#8b668e" width={1} strokeDasharray="22 4 5 4" opacity=".9" />
      </g>
      <g fill="#d08f55">
        {(Object.keys(peaks) as Sheet[]).map((s) => {
          const list = peaks[s]!;
          return list.map((x, i) =>
            i % 2 ? null : (
              <path key={s + i} d="M0 -3.500L3.900 3.200H-3.900Z" transform={`translate(${ORIGIN[s][0] + x / 3} ${ORIGIN[s][1] + list[i + 1] / 3})`} />
            )
          );
        })}
      </g>
      <g fontFamily="'Noto Sans', sans-serif" fontSize="11.700" fontStyle="italic" fontWeight="500" fill="#148a20" stroke="#f5f5ea" strokeWidth="2" paintOrder="stroke" textAnchor="middle">
        <text x="182.500" y="389" textLength="105">Europaschutzgebiet</text>
        <text x="183" y="403">Verwall</text>
      </g>
      <text {...label} transform="translate(293.500 373) rotate(76)">Tirol</text>
      <text {...label} transform="translate(252 641) rotate(-60)">Tirol</text>
      <text {...label} transform="translate(690 582) rotate(15)">Tirol</text>
      <text {...label} fontSize={10} transform="translate(749.500 742) rotate(84)">Österreich</text>
      <Shield x={106.5} y={538.5} w={33} text="L188" />
      <Shield x={687.5} y={328.5} w={33} text="B188" />
      <Shield x={680.5} y={783.5} w={21} text="27" />
      <Track />
    </MapSvg>
  );
}

const stats = [
  ["56.37 km", "Distance"],
  ["11436 m", "Descent"],
  ["105.8 km/h", "Max Speed"],
  ["31.5 km/h", "Avg. Speed"],
  ["107 bpm", "Avg. Heart rate"],
  ["147 bpm", "Max Heart rate"],
];

const runs: [string, boolean][] = [
  ["Run 1", false],
  ["Run 2", false],
  ["Nachtweidebahn", true],
  ["Run 3", false],
  ["Flimjochbahn", true],
  ["Run 4", false],
  ["Visnitzbahn", true],
  ["Run 5", false],
];

export default function App() {
  return (
    <>
      <GlobalStyle />
      <AppBar />
      <Page>
        <PageHeader>
          <div>
            <Title>AlpineSkiing</Title>
            <Subtitle>
              Jan 10, 2020 @ 08:56:34 in <Link>Ischgl-Samnaun</Link>
            </Subtitle>
          </div>
          <MenuButton>
            <svg width="24" height="24" viewBox="0 0 24 24" fill="#757575">
              <circle cx="12" cy="6" r="2" />
              <circle cx="12" cy="12" r="2" />
              <circle cx="12" cy="18" r="2" />
            </svg>
          </MenuButton>
        </PageHeader>
        <Grid>
          {stats.map(([value, label]) => (
            <StatCard key={label}>
              <StatValue>{value}</StatValue>
              <StatLabel>{label}</StatLabel>
            </StatCard>
          ))}
          <Panel $span={4}>
            <PanelHeader>
              <PanelTitle>Map</PanelTitle>
              <Chevron />
            </PanelHeader>
            <MapArea>
              <TerrainMap />
              <ZoomControl>
                <ZoomButton>
                  <svg width="14" height="14" viewBox="0 0 14 14">
                    <path d="M1 7H13M7 1V13" stroke="#1976d2" strokeWidth="2" />
                  </svg>
                </ZoomButton>
                <ZoomButton>
                  <svg width="14" height="14" viewBox="0 0 14 14">
                    <path d="M1 7H13" stroke="#1976d2" strokeWidth="2" />
                  </svg>
                </ZoomButton>
              </ZoomControl>
              <Controls>
                <Select>
                  Heart rate
                  <svg width="12" height="6" viewBox="0 0 12 6" fill="#757575">
                    <path d="M1 .5h10l-5 5z" />
                  </svg>
                </Select>
                <CheckRow>
                  <CheckBox />
                  Show run numbers
                </CheckRow>
                <CheckRow>
                  <CheckBox />
                  Show pistes
                </CheckRow>
              </Controls>
              <Attribution>
                <Link>Leaflet</Link> | © <Link>OpenStreetMap</Link> contributors
              </Attribution>
            </MapArea>
          </Panel>
          <Panel $span={2}>
            <PanelHeader>
              <PanelTitle>Runs (25)</PanelTitle>
              <Actions>
                <Expand />
                <Chevron />
              </Actions>
            </PanelHeader>
            <RunBody>
              <RunList>
                {runs.map(([name, lift]) => (
                  <RunRow key={name}>
                    {lift ? <GondolaIcon /> : <SkiIcon />}
                    {name}
                  </RunRow>
                ))}
              </RunList>
              <ScrollTrack>
                <ScrollArrow viewBox="0 0 17 17">
                  <path d="M5 11h7l-3.500-4z" fill="#a3a3a3" />
                </ScrollArrow>
                <ScrollThumb />
                <ScrollArrow viewBox="0 0 17 17">
                  <path d="M5 6h7l-3.500 4z" fill="#505050" />
                </ScrollArrow>
              </ScrollTrack>
            </RunBody>
          </Panel>
        </Grid>
      </Page>
    </>
  );
}
